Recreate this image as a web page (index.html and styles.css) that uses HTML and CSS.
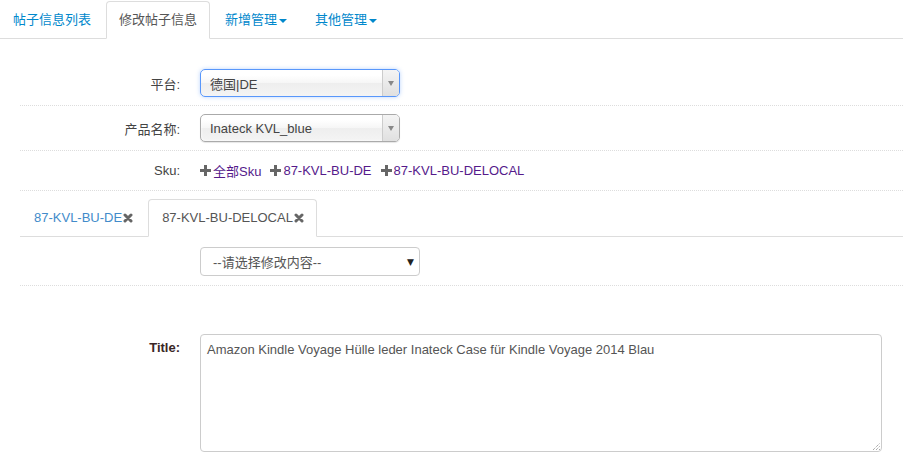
FILE: index.html
```html
<!DOCTYPE html>
<html>
<head>
<meta charset="utf-8">
<link rel="stylesheet" href="styles.css">
</head>
<body>
<ul class="nav">
  <li><a class="tab">帖子信息列表</a></li>
  <li><a class="tab active">修改帖子信息</a></li>
  <li><a class="tab">新增管理<span class="caret"></span></a></li>
  <li><a class="tab">其他管理<span class="caret"></span></a></li>
</ul>

<div class="content">
  <div class="row">
    <div class="label">平台:</div>
    <div class="chosen focus"><span class="chosen-text">德国|DE</span><span class="chosen-arrow"><i></i></span></div>
  </div>
  <div class="row">
    <div class="label">产品名称:</div>
    <div class="chosen"><span class="chosen-text">Inateck KVL_blue</span><span class="chosen-arrow"><i></i></span></div>
  </div>
  <div class="row sku-row">
    <div class="label">Sku:</div>
    <div class="skus">
      <a class="sku"><svg class="plus" viewBox="0 0 11 11"><path d="M4 0h3v4h4v3H7v4H4V7H0V4h4z"/></svg>全部Sku</a>
      <a class="sku"><svg class="plus" viewBox="0 0 11 11"><path d="M4 0h3v4h4v3H7v4H4V7H0V4h4z"/></svg>87-KVL-BU-DE</a>
      <a class="sku"><svg class="plus" viewBox="0 0 11 11"><path d="M4 0h3v4h4v3H7v4H4V7H0V4h4z"/></svg>87-KVL-BU-DELOCAL</a>
    </div>
  </div>

  <ul class="subnav">
    <li><a class="stab">87-KVL-BU-DE<svg class="x" viewBox="0 0 10 10"><path d="M2 2L8 8M8 2L2 8" stroke="#666" stroke-width="3" stroke-linecap="round" fill="none"/></svg></a></li>
    <li><a class="stab active">87-KVL-BU-DELOCAL<svg class="x" viewBox="0 0 10 10"><path d="M2 2L8 8M8 2L2 8" stroke="#666" stroke-width="3" stroke-linecap="round" fill="none"/></svg></a></li>
  </ul>

  <div class="row select-row">
    <div class="label"></div>
    <div class="select"><span>--请选择修改内容--</span><span class="tri">▼</span></div>
  </div>

  <div class="title-row">
    <div class="label bold">Title:</div>
    <div class="textarea">Amazon Kindle Voyage Hülle leder Inateck Case für Kindle Voyage 2014 Blau<svg class="grip" viewBox="0 0 8 8"><path d="M1 8L8 1M4 8L8 4M7 8L8 7" stroke="#888" stroke-width="1" stroke-dasharray="1 1" fill="none"/></svg></div>
  </div>
</div>
</body>
</html>
```

FILE: styles.css
```css
html, body {
  margin: 0;
  padding: 0;
  background: #fff;
}
body {
  font-family: "Liberation Sans", Arial, "Noto Sans CJK SC", sans-serif;
  font-size: 13px;
  color: #333;
  overflow: hidden;
}
ul {
  list-style: none;
  margin: 0;
  padding: 0;
}
.nav {
  display: flex;
  padding-top: 1px;
  border-bottom: 1px solid #ddd;
}
.nav li {
  margin-right: 2px;
  margin-bottom: -1px;
}
.tab {
  display: flex;
  align-items: center;
  height: 20px;
  line-height: 20px;
  padding: 8px 12px;
  border: 1px solid transparent;
  border-radius: 4px 4px 0 0;
  color: #0088cc;
}
.tab.active {
  color: #555;
  border-color: #ddd;
  border-bottom-color: #fff;
  background: #fff;
}
.caret {
  display: inline-block;
  width: 0;
  height: 0;
  margin-left: 2px;
  margin-top: 1px;
  border-top: 4px solid #0088cc;
  border-left: 4px solid transparent;
  border-right: 4px solid transparent;
}
.content {
  padding-left: 20px;
  margin-top: 22px;
}
.row {
  display: flex;
  align-items: center;
  padding: 8px 0;
  border-bottom: 1px dotted #ddd;
}
.label {
  width: 160px;
  flex: none;
  text-align: right;
  margin-right: 20px;
  color: #444;
}
.bold {
  font-weight: bold;
  color: #3a2626;
}
.chosen {
  box-sizing: border-box;
  width: 200px;
  height: 28px;
  display: flex;
  align-items: center;
  border: 1px solid #aaa;
  border-radius: 5px;
  background: linear-gradient(#fff 20%, #f6f6f6 50%, #eee 52%, #f4f4f4 100%);
  box-shadow: 0 0 3px #fff inset, 0 1px 1px rgba(0,0,0,0.1);
  color: #444;
  font-size: 13px;
}
.chosen.focus {
  border-color: #5897fb;
  box-shadow: 0 0 4px rgba(88,151,251,0.4);
}
.chosen-text {
  flex: 1;
  padding-left: 9px;
}
.chosen-arrow {
  width: 16px;
  align-self: stretch;
  border-left: 1px solid #ccc;
  border-radius: 0 4px 4px 0;
  background: linear-gradient(#f4f4f4, #e0e0e0);
  display: flex;
  align-items: center;
  justify-content: center;
}
.chosen-arrow i {
  width: 0;
  height: 0;
  border-top: 5px solid #888;
  border-left: 3px solid transparent;
  border-right: 3px solid transparent;
}
.sku-row {
  height: 23px;
}
.skus {
  display: flex;
  gap: 9px;
}
.sku {
  display: flex;
  align-items: center;
  color: #551a8b;
}
.plus {
  width: 11px;
  height: 11px;
  fill: #666;
  margin-right: 2px;
}
.subnav {
  display: flex;
  margin-top: 8px;
  border-bottom: 1px solid #ddd;
}
.subnav li {
  margin-right: 2px;
  margin-bottom: -1px;
}
.stab {
  display: flex;
  align-items: center;
  height: 20px;
  line-height: 20px;
  padding: 8px 12px 8px 13px;
  border: 1px solid transparent;
  border-radius: 4px 4px 0 0;
  color: #428bca;
}
.stab.active {
  color: #555;
  border-color: #ddd;
  border-bottom-color: #fff;
  background: #fff;
}
.x {
  width: 10px;
  height: 10px;
  margin-left: 1px;
}
.select-row {
  padding: 10px 0 9px;
}
.select {
  box-sizing: border-box;
  width: 220px;
  height: 29px;
  display: flex;
  align-items: center;
  justify-content: space-between;
  padding: 0 5px 0 12px;
  border: 1px solid #ccc;
  border-radius: 4px;
  color: #555;
}
.tri {
  font-size: 9px;
  color: #222;
  font-family: "DejaVu Sans", sans-serif;
}
.title-row {
  display: flex;
  margin-top: 48px;
}
.title-row .label {
  padding-top: 6px;
}
.textarea {
  position: relative;
  box-sizing: border-box;
  width: 682px;
  height: 118px;
  padding: 6px 6px;
  border: 1px solid #ccc;
  border-radius: 4px;
  color: #555;
  line-height: 18px;
}
.grip {
  position: absolute;
  right: 1px;
  bottom: 1px;
  width: 8px;
  height: 8px;
}
```
